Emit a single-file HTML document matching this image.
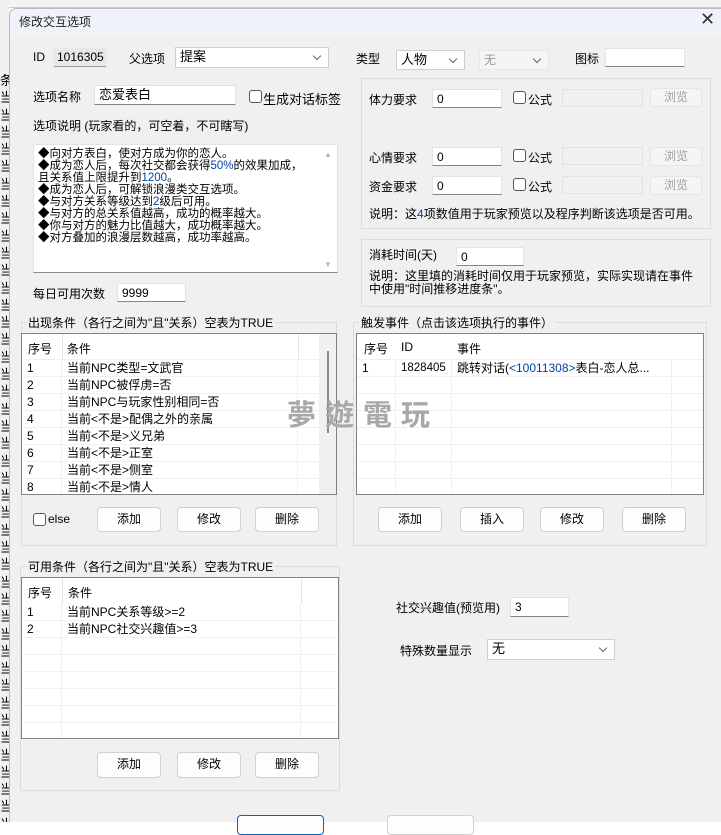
<!DOCTYPE html>
<html><head><meta charset="utf-8"><style>
*{box-sizing:border-box;margin:0;padding:0}
body{width:721px;height:822px;overflow:hidden;background:#fff;font-family:"Liberation Sans","Noto Sans CJK SC",sans-serif;font-size:12px;color:#000;position:relative}
.a{position:absolute;white-space:nowrap}
.inp{position:absolute;background:#fff;border:1px solid #e3e3e3;border-bottom:1px solid #868686;padding:2px 4px;font-size:12px;line-height:14px}
.btn{position:absolute;background:#fdfdfd;border:1px solid #d0d0d0;border-radius:4px;text-align:center;font-size:12px;line-height:22px}
.dis{color:#a0a0a0;background:#f5f5f5;border-color:#e5e5e5}
.grp{position:absolute;border:1px solid #dcdcdc}
.gl{position:absolute;background:#f0f0f0;padding:0 2px;line-height:12px;white-space:nowrap}
.cb{position:absolute;width:13px;height:13px;border:1px solid #555;border-radius:3px;background:#fff}
.list{position:absolute;background:#fff;border:1px solid #828282;overflow:hidden}
.row{position:absolute;left:0;right:0;height:17px;border-bottom:1px solid #f0f0f0;line-height:17px}
.cell{position:absolute;top:0;height:100%;border-right:1px solid #f0f0f0;padding-left:5px}
.combo{position:absolute;background:#fff;border:1px solid #cfcfcf;padding:2px 4px;line-height:14px}
.combo:after{content:"";position:absolute;right:8px;top:5px;width:5px;height:5px;border-right:1px solid #666;border-bottom:1px solid #666;transform:rotate(45deg)}
</style></head><body>
<!-- background strip -->
<div class="a" style="left:0;top:0;width:721px;height:8px;background:#f3f3f3;border-bottom:1px solid #ccc"></div>
<div class="a" style="left:0;top:0;width:9px;height:822px;background:#f0f0f0;overflow:hidden;font-size:13px;line-height:17.3px;white-space:normal;width:9px">
<div style="margin-top:72px;width:14px">条<br>当<br>当<br>当<br>当<br>当<br>当<br>当<br>当<br>当<br>当<br>当<br>当<br>当<br>当<br>当<br>当<br>当<br>当<br>当<br>当<br>当<br>当<br>当<br>当<br>当<br>当<br>当<br>当<br>当<br>当<br>当<br>当<br>当<br>当<br>当<br>当<br>当<br>当<br>当<br>当<br>当<br>当<br>当</div></div>
<!-- dialog -->
<div class="a" style="left:9px;top:8px;width:712px;height:814px;background:#f0f0f0;border-left:1px solid #bbb;border-top:1px solid #bbb;border-radius:7px 0 0 0"></div>
<div class="a" style="left:10px;top:9px;width:711px;height:27px;background:#eef3f9;border-radius:7px 0 0 0"></div>
<div class="a" style="left:19px;top:13px;font-size:12px;color:#222">修改交互选项</div>
<div class="a" style="left:700px;top:9px;font-size:18px;color:#333">✕</div>

<div class="a" style="left:33px;top:50px">ID</div>
<div class="a" style="left:54px;top:48px;width:52px;height:19px;background:#e8e8e8;border-bottom:1px solid #999;padding:2px 3px">1016305</div>
<div class="a" style="left:129px;top:50px">父选项</div>
<div class="combo" style="left:175px;top:47px;width:154px;height:21px;font-size:13px">提案</div>
<div class="a" style="left:356px;top:50px">类型</div>
<div class="combo" style="left:396px;top:50px;width:69px;height:20px;font-size:13px">人物</div>
<div class="combo" style="left:479px;top:50px;width:70px;height:20px;color:#999;background:#f5f5f5;border-color:#e8e8e8">无</div>
<div class="a" style="left:575px;top:50px">图标</div>
<div class="inp" style="left:605px;top:48px;width:80px;height:19px"></div>

<div class="a" style="left:33px;top:88px">选项名称</div>
<div class="inp" style="left:94px;top:85px;width:142px;height:20px;font-size:13px">恋爱表白</div>
<div class="cb" style="left:249px;top:90px"></div>
<div class="a" style="left:263px;top:89px;font-size:13px">生成对话标签</div>
<div class="a" style="left:33px;top:117px">选项说明 (玩家看的，可空着，不可瞎写)</div>
<div class="a" style="left:33px;top:144px;width:305px;height:129px;background:#fff;border:1px solid #e3e3e3;border-bottom:1px solid #888;padding:3px 4px;white-space:normal;line-height:12px;font-size:11.5px">◆向对方表白，使对方成为你的恋人。<br>◆成为恋人后，每次社交都会获得<span style="color:#0044aa">50%</span>的效果加成，<br>且关系值上限提升到<span style="color:#0044aa">1200</span>。<br>◆成为恋人后，可解锁浪漫类交互选项。<br>◆与对方关系等级达到<span style="color:#0044aa">2</span>级后可用。<br>◆与对方的总关系值越高，成功的概率越大。<br>◆你与对方的魅力比值越大，成功概率越大。<br>◆对方叠加的浪漫层数越高，成功率越高。</div>
<div class="a" style="left:324px;top:150px;color:#bbb;font-size:8px">▲</div>
<div class="a" style="left:324px;top:260px;color:#bbb;font-size:8px">▼</div>
<div class="a" style="left:33px;top:285px">每日可用次数</div>
<div class="inp" style="left:117px;top:283px;width:69px;height:19px">9999</div>

<!-- right group 1 -->
<div class="grp" style="left:361px;top:78px;width:350px;height:151px"></div>
<div class="a" style="left:369px;top:91px">体力要求</div>
<div class="a" style="left:369px;top:149px">心情要求</div>
<div class="a" style="left:369px;top:178px">资金要求</div>
<div class="inp" style="left:432px;top:89px;width:70px;height:19px">0</div>
<div class="inp" style="left:432px;top:147px;width:70px;height:19px">0</div>
<div class="inp" style="left:432px;top:176px;width:70px;height:19px">0</div>
<div class="cb" style="left:513px;top:91px"></div><div class="a" style="left:528px;top:91px">公式</div>
<div class="cb" style="left:513px;top:149px"></div><div class="a" style="left:528px;top:149px">公式</div>
<div class="cb" style="left:513px;top:178px"></div><div class="a" style="left:528px;top:178px">公式</div>
<div class="a" style="left:562px;top:89px;width:81px;height:18px;background:#f0f0f0;border:1px solid #e2e2e2"></div>
<div class="a" style="left:562px;top:147px;width:81px;height:18px;background:#f0f0f0;border:1px solid #e2e2e2"></div>
<div class="a" style="left:562px;top:176px;width:81px;height:18px;background:#f0f0f0;border:1px solid #e2e2e2"></div>
<div class="btn dis" style="left:650px;top:88px;width:52px;height:19px;line-height:17px">浏览</div>
<div class="btn dis" style="left:650px;top:147px;width:52px;height:19px;line-height:17px">浏览</div>
<div class="btn dis" style="left:650px;top:176px;width:52px;height:19px;line-height:17px">浏览</div>
<div class="a" style="left:369px;top:205px">说明：这<span style="color:#0044aa">4</span>项数值用于玩家预览以及程序判断该选项是否可用。</div>

<div class="grp" style="left:361px;top:239px;width:350px;height:68px"></div>
<div class="a" style="left:369px;top:246px">消耗时间(天)</div>
<div class="inp" style="left:456px;top:247px;width:68px;height:19px">0</div>
<div class="a" style="left:369px;top:270px;line-height:13px">说明：这里填的消耗时间仅用于玩家预览，实际实现请在事件<br>中使用"时间推移进度条"。</div>

<!-- 出现条件 -->
<div class="grp" style="left:21px;top:322px;width:316px;height:224px"></div>
<div class="gl" style="left:26px;top:317px">出现条件（各行之间为"且"关系）空表为TRUE</div>
<div class="list" style="left:21px;top:333px;width:316px;height:162px">
<div class="a" style="left:0;top:0;width:297px;height:26px;border-bottom:1px solid #f0f0f0"></div>
<div class="a" style="left:6px;top:6px;font-size:12px">序号</div>
<div class="a" style="left:40px;top:0;height:26px;border-right:1px solid #e5e5e5"></div>
<div class="a" style="left:45px;top:6px">条件</div>
<div class="a" style="left:276px;top:0;height:26px;border-right:1px solid #e5e5e5"></div>
<div class="a" style="left:297px;top:0;width:18px;height:162px;background:#f0f0f0"></div>
<div class="a" style="left:305px;top:17px;width:2px;height:82px;background:#888"></div>
<div style="position:absolute;left:0;top:26px;width:297px">
<div class="row" style="top:0"><div class="cell" style="left:0;width:40px">1</div><div class="cell" style="left:40px;width:236px">当前NPC类型=文武官</div></div>
<div class="row" style="top:17px"><div class="cell" style="left:0;width:40px">2</div><div class="cell" style="left:40px;width:236px">当前NPC被俘虏=否</div></div>
<div class="row" style="top:34px"><div class="cell" style="left:0;width:40px">3</div><div class="cell" style="left:40px;width:236px">当前NPC与玩家性别相同=否</div></div>
<div class="row" style="top:51px"><div class="cell" style="left:0;width:40px">4</div><div class="cell" style="left:40px;width:236px">当前&lt;不是&gt;配偶之外的亲属</div></div>
<div class="row" style="top:68px"><div class="cell" style="left:0;width:40px">5</div><div class="cell" style="left:40px;width:236px">当前&lt;不是&gt;义兄弟</div></div>
<div class="row" style="top:85px"><div class="cell" style="left:0;width:40px">6</div><div class="cell" style="left:40px;width:236px">当前&lt;不是&gt;正室</div></div>
<div class="row" style="top:102px"><div class="cell" style="left:0;width:40px">7</div><div class="cell" style="left:40px;width:236px">当前&lt;不是&gt;侧室</div></div>
<div class="row" style="top:119px"><div class="cell" style="left:0;width:40px">8</div><div class="cell" style="left:40px;width:236px">当前&lt;不是&gt;情人</div></div>
</div></div>
<div class="cb" style="left:33px;top:513px"></div><div class="a" style="left:48px;top:512px">else</div>
<div class="btn" style="left:97px;top:507px;width:64px;height:25px">添加</div>
<div class="btn" style="left:177px;top:507px;width:64px;height:25px">修改</div>
<div class="btn" style="left:255px;top:507px;width:64px;height:25px">删除</div>

<!-- 触发事件 -->
<div class="grp" style="left:353px;top:322px;width:354px;height:224px"></div>
<div class="gl" style="left:359px;top:317px">触发事件（点击该选项执行的事件）</div>
<div class="list" style="left:356px;top:333px;width:348px;height:162px">
<div class="a" style="left:7px;top:6px">序号</div><div class="a" style="left:44px;top:6px">ID</div><div class="a" style="left:100px;top:6px">事件</div>
<div class="a" style="left:0;top:0;width:348px;height:26px;border-bottom:1px solid #f0f0f0"></div>
<div style="position:absolute;left:0;top:26px;width:348px">
<div class="row" style="top:0"><div class="cell" style="left:0;width:39px">1</div><div class="cell" style="left:39px;width:56px;font-size:11.5px">1828405</div><div class="cell" style="left:95px;width:220px">跳转对话(<span style="color:#0044aa">&lt;10011308&gt;</span>表白-恋人总...</div></div>
<div class="row" style="top:17px"><div class="cell" style="left:0;width:39px"></div><div class="cell" style="left:39px;width:56px"></div><div class="cell" style="left:95px;width:220px"></div></div>
<div class="row" style="top:34px"><div class="cell" style="left:0;width:39px"></div><div class="cell" style="left:39px;width:56px"></div><div class="cell" style="left:95px;width:220px"></div></div>
<div class="row" style="top:51px"><div class="cell" style="left:0;width:39px"></div><div class="cell" style="left:39px;width:56px"></div><div class="cell" style="left:95px;width:220px"></div></div>
<div class="row" style="top:68px"><div class="cell" style="left:0;width:39px"></div><div class="cell" style="left:39px;width:56px"></div><div class="cell" style="left:95px;width:220px"></div></div>
<div class="row" style="top:85px"><div class="cell" style="left:0;width:39px"></div><div class="cell" style="left:39px;width:56px"></div><div class="cell" style="left:95px;width:220px"></div></div>
<div class="row" style="top:102px"><div class="cell" style="left:0;width:39px"></div><div class="cell" style="left:39px;width:56px"></div><div class="cell" style="left:95px;width:220px"></div></div>
<div class="row" style="top:119px;border:0"><div class="cell" style="left:0;width:39px"></div><div class="cell" style="left:39px;width:56px"></div><div class="cell" style="left:95px;width:220px"></div></div>
</div></div>
<div class="btn" style="left:378px;top:507px;width:64px;height:25px">添加</div>
<div class="btn" style="left:460px;top:507px;width:64px;height:25px">插入</div>
<div class="btn" style="left:540px;top:507px;width:64px;height:25px">修改</div>
<div class="btn" style="left:622px;top:507px;width:64px;height:25px">删除</div>

<div class="a" style="left:287px;top:392px;font-size:29px;color:#a8a8a8;letter-spacing:9px;font-family:'Noto Sans CJK TC',sans-serif;font-weight:bold">夢遊電玩</div>

<!-- 可用条件 -->
<div class="grp" style="left:20px;top:566px;width:320px;height:225px"></div>
<div class="gl" style="left:26px;top:561px">可用条件（各行之间为"且"关系）空表为TRUE</div>
<div class="list" style="left:21px;top:577px;width:318px;height:162px">
<div class="a" style="left:6px;top:6px">序号</div><div class="a" style="left:46px;top:6px">条件</div>
<div class="a" style="left:40px;top:0;height:26px;border-right:1px solid #e5e5e5"></div>
<div class="a" style="left:279px;top:0;height:26px;border-right:1px solid #e5e5e5"></div>
<div style="position:absolute;left:0;top:26px;width:318px">
<div class="row" style="top:0"><div class="cell" style="left:0;width:40px">1</div><div class="cell" style="left:40px;width:239px">当前NPC关系等级&gt;=2</div></div>
<div class="row" style="top:17px"><div class="cell" style="left:0;width:40px">2</div><div class="cell" style="left:40px;width:239px">当前NPC社交兴趣值&gt;=3</div></div>
<div class="row" style="top:34px"><div class="cell" style="left:0;width:40px"></div><div class="cell" style="left:40px;width:239px"></div></div>
<div class="row" style="top:51px"><div class="cell" style="left:0;width:40px"></div><div class="cell" style="left:40px;width:239px"></div></div>
<div class="row" style="top:68px"><div class="cell" style="left:0;width:40px"></div><div class="cell" style="left:40px;width:239px"></div></div>
<div class="row" style="top:85px"><div class="cell" style="left:0;width:40px"></div><div class="cell" style="left:40px;width:239px"></div></div>
<div class="row" style="top:102px"><div class="cell" style="left:0;width:40px"></div><div class="cell" style="left:40px;width:239px"></div></div>
<div class="row" style="top:119px;border:0"><div class="cell" style="left:0;width:40px"></div><div class="cell" style="left:40px;width:239px"></div></div>
</div></div>
<div class="btn" style="left:97px;top:752px;width:64px;height:26px">添加</div>
<div class="btn" style="left:177px;top:752px;width:64px;height:26px">修改</div>
<div class="btn" style="left:255px;top:752px;width:64px;height:26px">删除</div>

<div class="a" style="left:396px;top:599px">社交兴趣值(预览用)</div>
<div class="inp" style="left:510px;top:597px;width:59px;height:20px">3</div>
<div class="a" style="left:400px;top:642px">特殊数量显示</div>
<div class="combo" style="left:487px;top:639px;width:128px;height:21px;font-size:13px">无</div>

<div class="a" style="left:237px;top:815px;width:87px;height:20px;background:#fdfdfd;border:1px solid #0067c0;border-radius:4px"></div>
<div class="a" style="left:387px;top:815px;width:87px;height:20px;background:#fdfdfd;border:1px solid #d0d0d0;border-radius:4px"></div>
</body></html>
